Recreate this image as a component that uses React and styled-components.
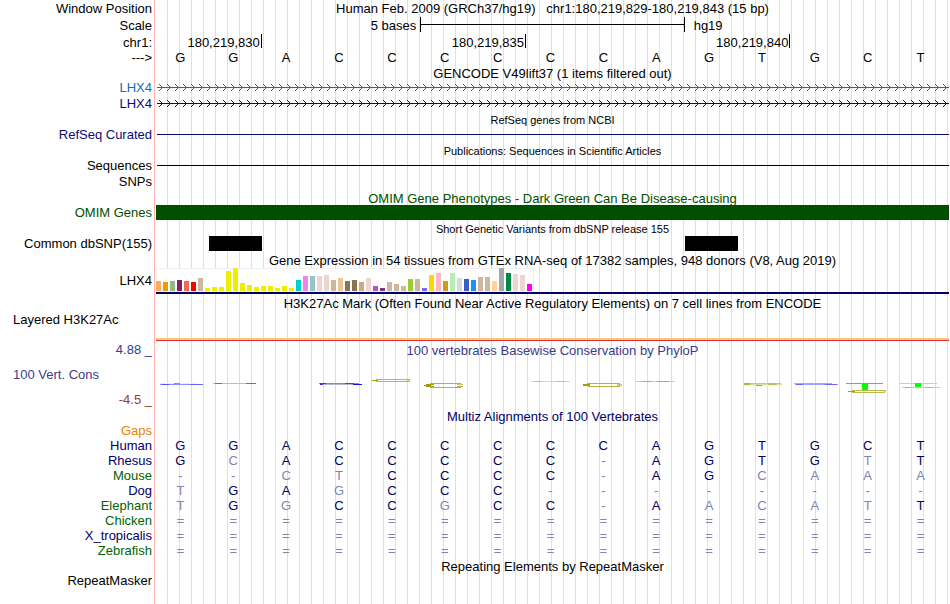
import React from 'react';
import styled, { createGlobalStyle } from 'styled-components';

const GlobalStyle = createGlobalStyle`
  * {
    box-sizing: border-box;
  }

  body {
    margin: 0;
    background: #FFF;
  }
`;

const Browser = styled.main`
  min-height: 100vh;
  padding-right: 1px;
  overflow: hidden;
  font-family: 'Liberation Sans', Arial, sans-serif;
  font-size: 13px;
  color: #000;
  background:
    linear-gradient(#FFB4B4, #FFB4B4) 154px 0 / 1px 100% no-repeat,
    linear-gradient(#FFF, #FFF) 0 0 / 156px 100% no-repeat,
    repeating-linear-gradient(to right, transparent 0 11px, #DCDCFA 11px 12px) 156px 0;
`;

const Row = styled.div`
  display: grid;
  grid-template-columns: 156px minmax(0, 1fr);
  height: ${({ $height }) => $height || 16}px;
  line-height: ${({ $height }) => $height || 16}px;
`;

const Label = styled.div`
  padding: 0 4px 0 13px;
  text-align: ${({ $left }) => ($left ? 'left' : 'right')};
  white-space: pre;
  color: ${({ $color }) => $color || '#000'};
`;

const Title = styled.h2`
  grid-column: 2;
  margin: 0;
  padding-top: 1px;
  font-size: ${({ $small }) => ($small ? 11 : 13)}px;
  font-weight: normal;
  text-align: center;
  white-space: pre;
  color: ${({ $color }) => $color || '#000'};
`;

const WindowTitle = styled(Title)`
  padding-top: 0;
`;

const Bases = styled.div`
  display: grid;
  grid-template-columns: repeat(15, minmax(0, 1fr));
`;

const Base = styled.span`
  padding-right: 4px;
  text-align: center;
`;

const Position = styled.span`
  grid-column: span ${({ $span }) => $span};
  height: 14px;
  padding-right: 1px;
  border-right: 1px solid #000;
  text-align: right;
`;

const ScaleText = styled.span`
  grid-column: span 5;
  padding: 0 4px 0 9px;
  text-align: ${({ $right }) => ($right ? 'right' : 'left')};
`;

const ScaleBar = styled.span`
  grid-column: span 5;
  height: 15px;
  border: solid #000;
  border-width: 0 1px;
  background: linear-gradient(#000, #000) 0 7px / 100% 1px no-repeat;
`;

const Line = styled.div`
  height: 1px;
  margin: 7px 0 0 1px;
  background: ${({ $color }) => $color};
`;

const GeneLine = styled.svg`
  display: block;
  width: calc(100% - 1px);
  height: 16px;
  margin-left: 1px;
`;

const Block = styled.div`
  grid-column: ${({ $column }) => $column};
  height: 15px;
  background: ${({ $color }) => $color};
`;

const Expression = styled.div`
  height: 26px;
  border-bottom: 2px solid #000064;
`;

const Chart = styled.svg`
  display: block;
`;

const Signal = styled.div`
  height: 3px;
  margin-left: 156px;
  border-top: 2px solid #FFC878;
  background: #DC3232;
`;

const Logo = styled.svg`
  display: block;
  width: 53px;
  height: 35px;
`;

const Alignment = styled.table`
  width: 100%;
  table-layout: fixed;
  border-collapse: collapse;
  line-height: 15px;
`;

const Species = styled.th`
  width: 156px;
  padding: 0 4px 0 0;
  font-weight: normal;
  text-align: right;
  color: ${({ $color }) => $color};
`;

const Aligned = styled.td`
  height: 15px;
  padding: 0 4px 0 0;
  text-align: center;
  color: ${({ $match }) => ($match ? '#000064' : '#8282B4')};
`;

const NAVY = '#0C0C78';
const BLUE = '#0C70B4';
const GREEN = '#005000';
const REFERENCE = 'GGACCCCCCAGTGCT';

const species = [
  { name: 'Gaps', color: '#E68200', bases: '               ' },
  { name: 'Human', color: '#000064', bases: REFERENCE },
  { name: 'Rhesus', color: '#000064', bases: 'GCACCCCC-AGTGTT' },
  { name: 'Mouse', color: '#006400', bases: '--CTCCCC-AGCAAA' },
  { name: 'Dog', color: '#000064', bases: 'TGAGCCC--------' },
  { name: 'Elephant', color: '#006400', bases: 'TGGCCGCC-AACATT' },
  { name: 'Chicken', color: '#006400', bases: '===============' },
  { name: 'X_tropicalis', color: '#000064', bases: '===============' },
  { name: 'Zebrafish', color: '#006400', bases: '===============' },
];

// one [color, height] pair per tissue
const tissues = [
  ['#FFAA56', 10], ['#EE9A00', 9], ['#8FBC8F', 10], ['#8B1C62', 11], ['#EE6A50', 10],
  ['#FF0000', 9], ['#CDB79E', 13],
  ...[3, 4, 4, 20, 23, 8, 6, 4, 5, 5, 3, 5, 3].map(height => ['#EEEE00', height]),
  ['#00CDCD', 11], ['#EE82EE', 15], ['#9AC0CD', 15], ['#EED5D2', 15], ['#EED5D2', 16],
  ['#CDB79E', 11], ['#EEC591', 13], ['#8B7355', 10], ['#8B7355', 11], ['#CDAA7D', 9],
  ['#EED5D2', 13], ['#B452CD', 5], ['#7A378B', 3], ['#CDB79E', 9], ['#CDB79E', 7],
  ['#CDB79E', 5], ['#9ACD32', 12], ['#CDB79E', 12], ['#7A67EE', 3], ['#FFD700', 16],
  ['#FFB6C1', 18], ['#CD9B1D', 10], ['#B4EEB4', 18], ['#D9D9D9', 13], ['#3A5FCD', 12],
  ['#1E90FF', 11], ['#CDB79E', 14], ['#CDB79E', 14], ['#FFD39B', 10], ['#A6A6A6', 23],
  ['#008B45', 18], ['#EED5D2', 17], ['#EED5D2', 16], ['#FF00FF', 7],
];

// flattened sequence logo letters: [x, y, width, height, color]
const logos = [
  [[4, 25, 35, 1, '#DCFADC'], [18, 25, 6, 1, '#00FF00'], [4, 26, 43, 1, '#8C8CFF'], [6, 26, 7, 1, '#5050FF'], [34, 26, 13, 1, '#6464FF']],
  [[4, 25, 43, 1, '#B4B4FF'], [6, 25, 7, 1, '#6464FF'], [37, 25, 10, 1, '#6464FF']],
  [],
  [[4, 25, 40, 1, '#8282FF'], [5, 25, 6, 2, '#3232FF'], [8, 26, 32, 1, '#B4B4D2'], [30, 25, 9, 1, '#3C3CFF'], [38, 26, 9, 1, '#1414E6']],
  [[9, 21, 34, 1, '#B9B950'], [5, 22, 6, 1, '#A0A000'], [39, 22, 4, 1, '#DCDCA0'], [9, 23, 34, 1, '#B9B950']],
  [[10, 25, 31, 1, '#B4B43C'], [6, 26, 8, 1, '#A0A000'], [4, 27, 7, 1, '#969600'], [6, 28, 8, 1, '#A0A000'], [37, 26, 6, 1, '#C8C878'], [37, 28, 6, 1, '#B4B43C'], [10, 29, 31, 1, '#B4B43C']],
  [],
  [[5, 23, 39, 1, '#DCDCA0'], [8, 23, 8, 1, '#C8C878'], [30, 23, 9, 1, '#C8C878']],
  [[8, 25, 33, 1, '#B4B43C'], [4, 26, 7, 2, '#A0A000'], [38, 26, 5, 1, '#C8C878'], [38, 27, 5, 1, '#C8C878'], [9, 28, 32, 1, '#B4B43C']],
  [[4, 23, 39, 1, '#FFB4B4'], [10, 23, 10, 1, '#FF8282'], [25, 23, 12, 1, '#FF8282']],
  [],
  [[6, 25, 37, 1, '#C8C878'], [5, 26, 39, 1, '#DCDCA0'], [6, 25, 6, 2, '#B4B43C'], [30, 25, 8, 2, '#BEBE5A'], [4, 27, 36, 1, '#DCFADC'], [18, 27, 6, 1, '#00FF00']],
  [[4, 25, 38, 1, '#FF8C8C'], [5, 26, 43, 1, '#A0A0FF'], [6, 26, 7, 1, '#6464FF'], [35, 26, 12, 1, '#6464FF']],
  [[3, 25, 37, 1, '#00FF00'], [19, 25, 6, 7, '#00FF00'], [9, 32, 34, 1, '#B9B950'], [5, 33, 7, 1, '#A0A000'], [40, 33, 3, 1, '#DCDCA0'], [9, 34, 33, 1, '#B9B950']],
  [[3, 25, 38, 1, '#82FF82'], [19, 25, 6, 4, '#00FF00'], [6, 29, 38, 1, '#D2D28C'], [9, 29, 6, 1, '#B4B43C'], [29, 29, 8, 1, '#BEBE5A']],
];

const GeneTrack = ({ id, color }) => (
  <GeneLine shapeRendering="crispEdges" aria-hidden="true">
    <defs>
      <pattern id={id} width="8" height="16" patternUnits="userSpaceOnUse">
        <path
          d="M2 4h1v1h-1zM3 5h1v1h-1zM4 6h1v1h-1zM5 7h1v1h-1zM4 8h1v1h-1zM3 9h1v1h-1zM2 10h1v1h-1z"
          fill={color}
        />
      </pattern>
    </defs>
    <rect width="100%" height="16" fill={`url(#${id})`} />
    <rect y="7" width="100%" height="1" fill={color} />
  </GeneLine>
);

const ExpressionChart = () => (
  <Chart width="378" height="24" shapeRendering="crispEdges" role="img" aria-label="LHX4 expression">
    <rect width="378" height="24" fill="#F0F0F0" />
    <rect x="1" y="1" width="376" height="22" fill="#FFF" />
    {tissues.map(([color, height], i) => (
      <rect key={i} x={i * 7} y={23 - height} width="5" height={height} fill={color} />
    ))}
  </Chart>
);

const MultizTable = () => (
  <Alignment>
    <tbody>
      {species.map(({ name, color, bases }) => (
        <tr key={name}>
          <Species scope="row" $color={color}>{name}</Species>
          {bases.split('').map((base, i) => (
            <Aligned key={i} $match={base === REFERENCE[i]}>{base}</Aligned>
          ))}
        </tr>
      ))}
    </tbody>
  </Alignment>
);

const App = () => (
  <Browser>
    <GlobalStyle />
    <Row $height={17}>
      <Label>Window Position</Label>
      <WindowTitle>{'Human Feb. 2009 (GRCh37/hg19)   chr1:180,219,829-180,219,843 (15 bp)'}</WindowTitle>
    </Row>
    <Row $height={17}>
      <Label>Scale</Label>
      <Bases>
        <ScaleText $right>5 bases</ScaleText>
        <ScaleBar />
        <ScaleText>hg19</ScaleText>
      </Bases>
    </Row>
    <Row $height={17}>
      <Label>chr1:</Label>
      <Bases>
        <Position $span={2}>180,219,830</Position>
        <Position $span={5}>180,219,835</Position>
        <Position $span={5}>180,219,840</Position>
      </Bases>
    </Row>
    <Row $height={14}>
      <Label>{'--->'}</Label>
      <Bases>
        {REFERENCE.split('').map((base, i) => <Base key={i}>{base}</Base>)}
      </Bases>
    </Row>
    <Row $height={15}>
      <Title>GENCODE V49lift37 (1 items filtered out)</Title>
    </Row>
    <Row>
      <Label $color={BLUE}>LHX4</Label>
      <GeneTrack id="arrows-coding" color={BLUE} />
    </Row>
    <Row>
      <Label $color={NAVY}>LHX4</Label>
      <GeneTrack id="arrows-basic" color={NAVY} />
    </Row>
    <Row $height={15}>
      <Title $small>RefSeq genes from NCBI</Title>
    </Row>
    <Row>
      <Label $color={NAVY}>RefSeq Curated</Label>
      <Line $color={NAVY} />
    </Row>
    <Row $height={15}>
      <Title $small>Publications: Sequences in Scientific Articles</Title>
    </Row>
    <Row>
      <Label>Sequences</Label>
      <Line $color="#000" />
    </Row>
    <Row>
      <Label>SNPs</Label>
    </Row>
    <Row $height={15}>
      <Title $color={GREEN}>OMIM Gene Phenotypes - Dark Green Can Be Disease-causing</Title>
    </Row>
    <Row $height={15}>
      <Label $color={GREEN}>OMIM Genes</Label>
      <Block $color={GREEN} />
    </Row>
    <Row>
      <Title $small>Short Genetic Variants from dbSNP release 155</Title>
    </Row>
    <Row $height={15}>
      <Label>Common dbSNP(155)</Label>
      <Bases>
        <Block $column={2} $color="#000" />
        <Block $column={11} $color="#000" />
      </Bases>
    </Row>
    <Row $height={17}>
      <Title>Gene Expression in 54 tissues from GTEx RNA-seq of 17382 samples, 948 donors (V8, Aug 2019)</Title>
    </Row>
    <Row $height={26}>
      <Label>LHX4</Label>
      <Expression>
        <ExpressionChart />
      </Expression>
    </Row>
    <Row $height={18}>
      <Title>H3K27Ac Mark (Often Found Near Active Regulatory Elements) on 7 cell lines from ENCODE</Title>
    </Row>
    <Row>
      <Label $left>Layered H3K27Ac</Label>
    </Row>
    <Row $height={10} />
    <Signal />
    <Row $height={17}>
      <Label $color="#3C3C8C">4.88 _</Label>
      <Title $color="#3C3C8C">100 vertebrates Basewise Conservation by PhyloP</Title>
    </Row>
    <Row $height={34}>
      <Label $left $color="#3C3C8C">100 Vert. Cons</Label>
      <Bases>
        {logos.map((shapes, i) => (
          <Logo key={i} shapeRendering="crispEdges" aria-hidden="true">
            {shapes.map(([x, y, width, height, color], j) => (
              <rect key={j} x={x} y={y} width={width} height={height} fill={color} />
            ))}
          </Logo>
        ))}
      </Bases>
    </Row>
    <Row>
      <Label $color="#8C3C3C">-4.5 _</Label>
    </Row>
    <Row $height={15}>
      <Title $color="#000064">Multiz Alignments of 100 Vertebrates</Title>
    </Row>
    <MultizTable />
    <Row $height={15}>
      <Title>Repeating Elements by RepeatMasker</Title>
    </Row>
    <Row $height={15}>
      <Label>RepeatMasker</Label>
    </Row>
  </Browser>
);

export default App;
